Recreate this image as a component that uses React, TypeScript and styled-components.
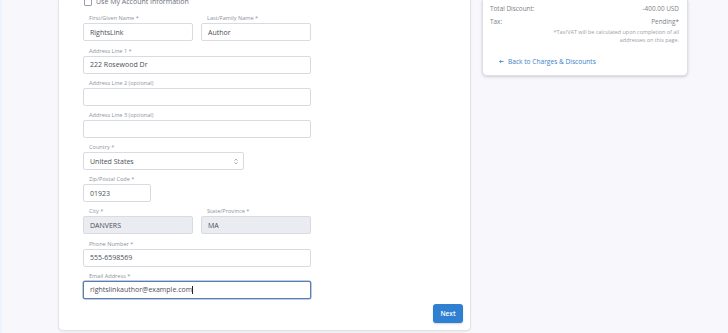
import React from "react";
import styled, { createGlobalStyle } from "styled-components";

const GlobalStyle = createGlobalStyle`
  html, body {
    margin: 0;
    padding: 0;
    background: #f8f8fc;
    font-family: "Open Sans", "Noto Sans", sans-serif;
    overflow: hidden;
  }
`;

const Page = styled.div`
  display: flex;
  align-items: flex-start;
  gap: 11px;
  height: 333px;
  padding-left: 56px;
  border-left: 2px solid #eef4fd;
  box-sizing: border-box;
`;

const MainCard = styled.div`
  width: 413px;
  height: 331px;
  box-sizing: border-box;
  background: #fff;
  border: 1px solid #e1e2ea;
  border-top: none;
  border-radius: 0 0 5px 5px;
  box-shadow: 0 1px 2px rgba(40, 40, 80, 0.08);
  padding: 0 7px 7px 24px;
  display: flex;
  flex-direction: column;
`;

const CheckRow = styled.label`
  display: flex;
  align-items: center;
  gap: 4px;
  margin-top: -3px;
  height: 10px;
  padding-left: 1px;
  font-size: 7px;
  color: #6b7079;
`;

const CheckBox = styled.span`
  width: 6px;
  height: 6px;
  border: 1px solid #9aa0aa;
  border-radius: 1px;
  background: #fff;
`;

const Form = styled.div`
  width: 228px;
  margin-top: 8px;
  display: flex;
  flex-direction: column;
`;

const Row = styled.div`
  display: flex;
  gap: 8px;
`;

const Field = styled.div<{ $width?: number }>`
  display: flex;
  flex-direction: column;
  width: ${(p) => (p.$width ? `${p.$width}px` : "100%")};
  margin-bottom: 5.2px;
`;

const Label = styled.div`
  height: 8px;
  line-height: 8px;
  padding-left: 6px;
  margin-bottom: 1px;
  font-size: 5.6px;
  color: #8e939c;
  white-space: nowrap;
`;

const Input = styled.div<{ $disabled?: boolean; $focus?: boolean }>`
  height: 18px;
  box-sizing: border-box;
  display: flex;
  align-items: center;
  padding: 0 6px;
  font-size: 7px;
  color: #4a4f57;
  background: ${(p) => (p.$disabled ? "#eaecf1" : "#fff")};
  border: 1px solid ${(p) => (p.$focus ? "#5b7db0" : "#d8dbe1")};
  border-radius: 2px;
  box-shadow: ${(p) => (p.$focus ? "0 0 0 0.5px #7d9bc6" : "none")};
  position: relative;
`;

const Caret = styled.span`
  width: 1px;
  height: 8px;
  background: #222;
`;

const SelectIcon = styled.svg`
  position: absolute;
  right: 5px;
  top: 5px;
`;

const Actions = styled.div`
  margin-top: auto;
  display: flex;
  justify-content: flex-end;
`;

const NextButton = styled.button`
  width: 30px;
  height: 19px;
  padding: 0;
  border: none;
  border-radius: 3px;
  background: #2f80d1;
  color: #fff;
  font-family: "Open Sans", sans-serif;
  font-size: 6.5px;
  font-weight: 600;
  box-shadow: 0 1px 2px rgba(0, 40, 100, 0.2);
`;

const SideCard = styled.div`
  width: 206px;
  height: 76px;
  box-sizing: border-box;
  background: #fff;
  border: 1px solid #dedfe7;
  border-top: none;
  border-radius: 0 0 5px 5px;
  box-shadow: 0 1px 3px rgba(40, 40, 80, 0.22);
  padding: 3px 8px 0 7px;
  display: flex;
  flex-direction: column;
`;

const SumRow = styled.div`
  display: flex;
  justify-content: space-between;
  height: 13px;
  line-height: 11px;
  font-size: 6.4px;
  color: #7a7f88;
`;

const Note = styled.div`
  text-align: right;
  font-size: 5.4px;
  line-height: 8px;
  color: #9a9ea6;
  width: 140px;
  align-self: flex-end;
  margin-top: -1px;
`;

const BackLink = styled.a`
  display: flex;
  align-items: center;
  gap: 4px;
  margin-top: 13px;
  padding-left: 9px;
  font-size: 6.6px;
  color: #3a7fc6;
  text-decoration: none;
`;

const App = () => {
  return (
    <React.Fragment>
      <GlobalStyle />
      <Page>
        <MainCard>
          <CheckRow>
            <CheckBox />
            Use My Account Information
          </CheckRow>
          <Form>
            <Row>
              <Field $width={110}>
                <Label>First/Given Name *</Label>
                <Input>RightsLink</Input>
              </Field>
              <Field $width={110}>
                <Label>Last/Family Name *</Label>
                <Input>Author</Input>
              </Field>
            </Row>
            <Field>
              <Label>Address Line 1 *</Label>
              <Input>222 Rosewood Dr</Input>
            </Field>
            <Field>
              <Label>Address Line 2 (optional)</Label>
              <Input />
            </Field>
            <Field>
              <Label>Address Line 3 (optional)</Label>
              <Input />
            </Field>
            <Field $width={161}>
              <Label>Country *</Label>
              <Input>
                United States
                <SelectIcon width="4" height="7" viewBox="0 0 4 7">
                  <path
                    d="M0.6 2.6 L2 1.2 L3.4 2.6 M0.6 4.4 L2 5.8 L3.4 4.4"
                    fill="none"
                    stroke="#6d727a"
                    strokeWidth="0.7"
                  />
                </SelectIcon>
              </Input>
            </Field>
            <Field $width={68}>
              <Label>Zip/Postal Code *</Label>
              <Input>01923</Input>
            </Field>
            <Row>
              <Field $width={110}>
                <Label>City *</Label>
                <Input $disabled>DANVERS</Input>
              </Field>
              <Field $width={110}>
                <Label>State/Province *</Label>
                <Input $disabled>MA</Input>
              </Field>
            </Row>
            <Field>
              <Label>Phone Number *</Label>
              <Input>555-6598569</Input>
            </Field>
            <Field>
              <Label>Email Address *</Label>
              <Input $focus>
                rightslinkauthor@example.com
                <Caret />
              </Input>
            </Field>
          </Form>
          <Actions>
            <NextButton>Next</NextButton>
          </Actions>
        </MainCard>
        <SideCard>
          <SumRow>
            <span>Total Discount:</span>
            <span>-400.00 USD</span>
          </SumRow>
          <SumRow>
            <span>Tax:</span>
            <span>Pending*</span>
          </SumRow>
          <Note>
            *Tax/VAT will be calculated upon completion of all addresses on this
            page.
          </Note>
          <BackLink href="#">
            <svg width="5" height="5" viewBox="0 0 5 5">
              <path
                d="M4.6 2.5 H0.8 M2.2 1 L0.7 2.5 L2.2 4"
                fill="none"
                stroke="#3a7fc6"
                strokeWidth="0.8"
              />
            </svg>
            Back to Charges &amp; Discounts
          </BackLink>
        </SideCard>
      </Page>
    </React.Fragment>
  );
};

export default App;
